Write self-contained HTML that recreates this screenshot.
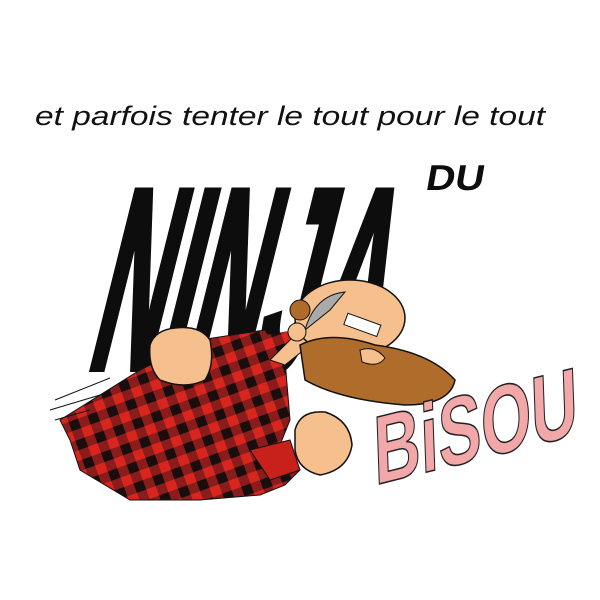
<!DOCTYPE html>
<html><head><style>html,body{margin:0;padding:0;background:#fff;width:600px;height:600px;overflow:hidden}</style></head>
<body>
<svg width="600" height="600" viewBox="0 0 600 600" xmlns="http://www.w3.org/2000/svg">
<defs>
<pattern id="plaid" width="20" height="20" patternUnits="userSpaceOnUse" patternTransform="rotate(-20)">
<rect width="20" height="20" fill="#d8261f"/>
<rect x="0" y="0" width="10" height="20" fill="#6a1a1a" opacity="0.7"/>
<rect x="0" y="0" width="20" height="10" fill="#6a1a1a" opacity="0.7"/>
<rect x="0" y="0" width="10" height="10" fill="#1a0d0d"/>
</pattern>
</defs>
<text x="35" y="125" font-family="Liberation Sans, sans-serif" font-size="27" font-style="italic" fill="#111" textLength="510" lengthAdjust="spacingAndGlyphs">et parfois tenter le tout pour le tout</text>
<g transform="translate(85,368) skewX(-14)">
<text x="0" y="0" font-family="Liberation Sans, sans-serif" font-weight="bold" font-size="190" fill="#0d0d0d" stroke="#0d0d0d" stroke-width="6" textLength="290" lengthAdjust="spacingAndGlyphs" transform="scale(1,1.35)">NINJA</text>
</g>
<text x="458" y="190" font-family="Liberation Sans, sans-serif" font-weight="bold" font-size="36" fill="#0d0d0d" transform="skewX(-10)" textLength="58" lengthAdjust="spacingAndGlyphs">DU</text>
<path d="M60 420 L140 370 L200 340 L265 330 L285 360 L290 420 L280 445 L300 470 L285 485 L260 495 L200 500 L130 500 L80 470 L70 440 Z" fill="url(#plaid)" stroke="#111" stroke-width="1"/>
<path d="M265 335 L295 330 L285 360 Z" fill="url(#plaid)"/>
<path d="M270 360 L300 330 L310 345 L285 365 Z" fill="#f5c08e" stroke="#111"/>
<path d="M250 450 L290 440 L300 470 L270 480 Z" fill="#c8201a" stroke="#111"/>
<ellipse cx="350" cy="318" rx="55" ry="38" fill="#f5c08e" stroke="#111" stroke-width="1.5"/>
<path d="M305 330 Q315 295 345 292 L330 310 Z" fill="#aaa" stroke="#111"/>
<circle cx="300" cy="310" r="10" fill="#b06a2a" stroke="#111"/>
<circle cx="297" cy="332" r="9" fill="#f5c08e" stroke="#111"/>
<path d="M300 345 Q330 330 375 345 Q430 352 455 380 Q450 405 405 405 Q340 400 305 380 Z" fill="#b06c2b" stroke="#111" stroke-width="1.5"/>
<rect x="345" y="318" width="35" height="12" fill="#fff" stroke="#111" transform="rotate(20 360 324)"/>
<path d="M360 350 Q375 345 385 358 Q378 368 362 362 Z" fill="#f5c08e" stroke="#111"/>
<path d="M150 345 Q155 330 175 328 Q200 325 210 340 Q215 365 205 380 Q185 390 160 380 Q148 368 150 345 Z" fill="#f5c08e" stroke="#111" stroke-width="1.5"/>
<path d="M295 430 Q300 410 325 412 Q350 420 352 445 Q348 470 320 475 Q298 470 295 450 Z" fill="#f5c08e" stroke="#111" stroke-width="1.5"/>
<path d="M55 400 L110 378 M50 410 L100 395 M55 420 L90 410" stroke="#111" stroke-width="1"/>
<g transform="translate(375,485) rotate(-14) skewX(-12)">
<text x="0" y="0" font-family="Liberation Sans, sans-serif" font-weight="bold" font-size="95" fill="#f2a8a8" stroke="#222" stroke-width="1.5" textLength="210" lengthAdjust="spacingAndGlyphs">BiSOU</text>
</g>
</svg>
</body></html>
